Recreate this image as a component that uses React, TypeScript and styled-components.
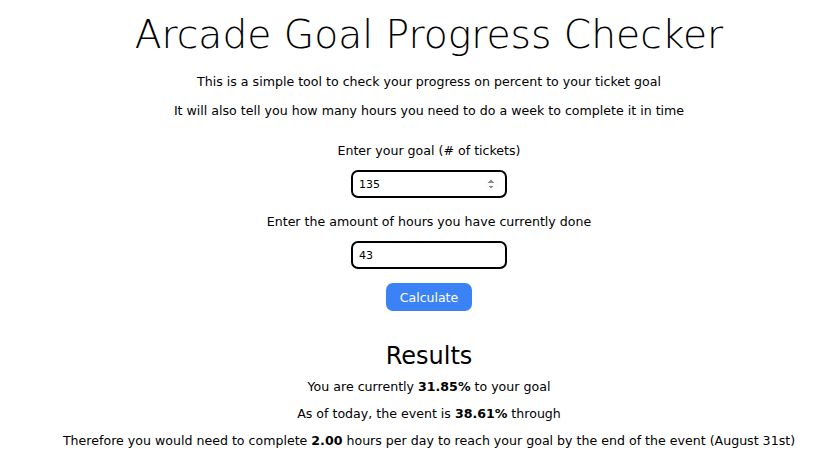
import React, { useState } from "react";
import styled, { createGlobalStyle } from "styled-components";

const GlobalStyle = createGlobalStyle`
  body {
    margin: 0;
    background: #fff;
    color: #000;
    font-family: "DejaVu Sans", "Noto Sans", sans-serif;
  }
`;

const Page = styled.main`
  display: flex;
  flex-direction: column;
  align-items: center;
  text-align: center;
  padding: 10px 0 0 30px;
`;

const Title = styled.h1`
  margin: 0 0 12px;
  font-size: 39.2px;
  font-weight: 300;
  line-height: 50px;
`;

const Text = styled.p<{ $gap?: number }>`
  margin: 0 0 ${(p) => p.$gap ?? 10}px;
  font-size: 12.6px;
  line-height: 19px;
  white-space: nowrap;
`;

const Field = styled.input`
  box-sizing: border-box;
  width: 156px;
  height: 28px;
  border: 2px solid #000;
  border-radius: 7px;
  padding: 0 6px;
  font-family: inherit;
  font-size: 11px;
  margin-bottom: 14px;
  outline: none;

  &::-webkit-inner-spin-button {
    opacity: 1;
    transform: scale(0.8);
  }
`;

const Button = styled.button`
  width: 86px;
  height: 28px;
  border: none;
  border-radius: 7px;
  background: #3b82f6;
  color: #fff;
  font-family: inherit;
  font-size: 12.5px;
  margin-bottom: 30px;
`;

const Heading = styled.h2`
  margin: 0 0 6px;
  font-size: 24px;
  font-weight: 400;
  line-height: 30px;
`;

const Result = styled(Text)`
  font-size: 12.6px;
  margin-bottom: 8px;
`;

export default function App() {
  const [goal, setGoal] = useState("135");
  const [hours, setHours] = useState("43");

  return (
    <>
      <GlobalStyle />
      <Page>
        <Title>Arcade Goal Progress Checker</Title>
        <Text>This is a simple tool to check your progress on percent to your ticket goal</Text>
        <Text $gap={21}>It will also tell you how many hours you need to do a week to complete it in time</Text>
        <Text $gap={10}>Enter your goal (# of tickets)</Text>
        <Field type="number" value={goal} onChange={(e) => setGoal(e.target.value)} />
        <Text $gap={10}>Enter the amount of hours you have currently done</Text>
        <Field type="text" value={hours} onChange={(e) => setHours(e.target.value)} />
        <Button>Calculate</Button>
        <Heading>Results</Heading>
        <Result>
          You are currently <b>31.85%</b> to your goal
        </Result>
        <Result>
          As of today, the event is <b>38.61%</b> through
        </Result>
        <Result>
          Therefore you would need to complete <b>2.00</b> hours per day to reach your goal by the end of the event (August 31st)
        </Result>
      </Page>
    </>
  );
}
